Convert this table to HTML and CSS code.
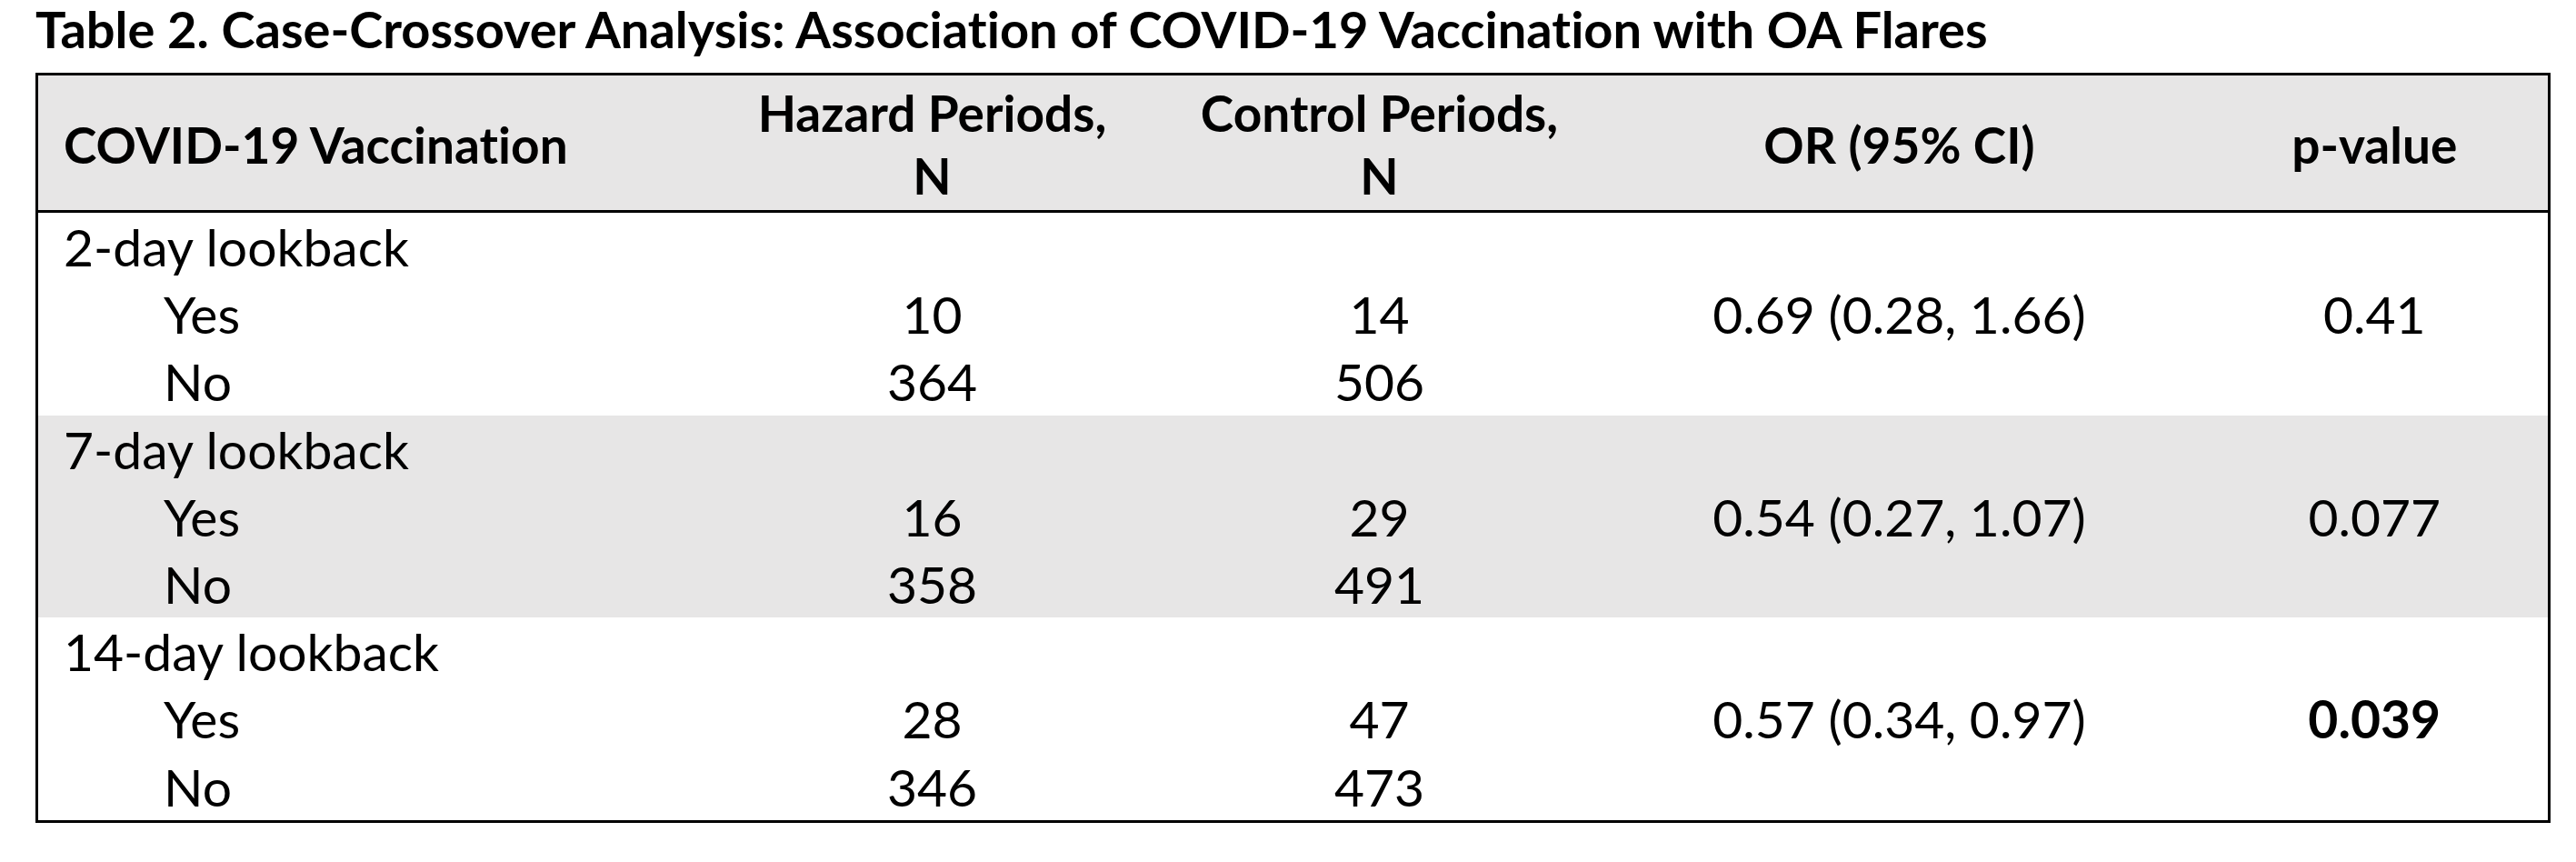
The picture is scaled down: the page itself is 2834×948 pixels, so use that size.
FILE: index.html
```html
<!DOCTYPE html>
<html lang="en">
<head>
<meta charset="utf-8">
<title>Table 2</title>
<link rel="stylesheet" href="styles.css">
</head>
<body>
<div class="page">
  <h1 class="title">Table 2. Case-Crossover Analysis: Association of COVID-19 Vaccination with OA Flares</h1>
  <table class="tbl">
    <colgroup>
      <col class="w1"><col class="w2"><col class="w3"><col class="w4"><col class="w5">
    </colgroup>
    <thead>
      <tr>
        <th class="lbl">COVID-19 Vaccination</th>
        <th>Hazard Periods,<br>N</th>
        <th>Control Periods,<br>N</th>
        <th>OR (95% CI)</th>
        <th>p-value</th>
      </tr>
    </thead>
    <tbody>
      <tr><td class="lbl">2-day lookback</td><td></td><td></td><td></td><td></td></tr>
      <tr><td class="lbl sub">Yes</td><td>10</td><td>14</td><td>0.69 (0.28, 1.66)</td><td>0.41</td></tr>
      <tr><td class="lbl sub">No</td><td>364</td><td>506</td><td></td><td></td></tr>
    </tbody>
    <tbody class="shade">
      <tr><td class="lbl">7-day lookback</td><td></td><td></td><td></td><td></td></tr>
      <tr><td class="lbl sub">Yes</td><td>16</td><td>29</td><td>0.54 (0.27, 1.07)</td><td>0.077</td></tr>
      <tr><td class="lbl sub">No</td><td>358</td><td>491</td><td></td><td></td></tr>
    </tbody>
    <tbody>
      <tr><td class="lbl">14-day lookback</td><td></td><td></td><td></td><td></td></tr>
      <tr><td class="lbl sub">Yes</td><td>28</td><td>47</td><td>0.57 (0.34, 0.97)</td><td class="bold">0.039</td></tr>
      <tr><td class="lbl sub">No</td><td>346</td><td>473</td><td></td><td></td></tr>
    </tbody>
  </table>
</div>
</body>
</html>
```

FILE: styles.css
```css
html, body {
  margin: 0;
  padding: 0;
  background: #ffffff;
}

.page {
  padding: 0 0 0 39px;
  font-family: Lato, "Liberation Sans", sans-serif;
  font-variant-ligatures: none;
  color: #000000;
}

.title {
  margin: 0 0 16px 0;
  font-size: 56px;
  line-height: 64px;
  font-weight: 700;
  white-space: nowrap;
}

.tbl {
  border-collapse: collapse;
  table-layout: fixed;
  width: 2764px;
  border: 3px solid #000000;
}

.w1 { width: 733px; }
.w2 { width: 504px; }
.w3 { width: 480px; }
.w4 { width: 664px; }
.w5 { width: 383px; }

.tbl thead tr {
  background: #e7e6e6;
}

.tbl th {
  font-size: 55px;
  font-weight: 700;
  line-height: 69px;
  padding: 7px 0 3px 0;
  text-align: center;
  vertical-align: middle;
  white-space: nowrap;
  border-bottom: 3px solid #000000;
}

.tbl td {
  font-size: 57px;
  font-weight: 400;
  line-height: 74.2px;
  padding: 0;
  text-align: center;
  white-space: nowrap;
}

.tbl .lbl {
  text-align: left;
  padding-left: 28px;
}

.tbl .sub {
  padding-left: 138px;
}

.shade tr {
  background: #e7e6e6;
}

.tbl .bold {
  font-weight: 700;
}
```
